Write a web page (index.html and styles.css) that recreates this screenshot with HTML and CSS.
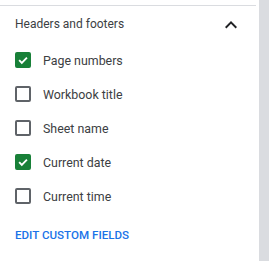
FILE: index.html
```html
<!DOCTYPE html>
<html>
<head>
<meta charset="utf-8">
<link rel="stylesheet" href="styles.css">
</head>
<body>
<div class="page">
  <div class="panel">
    <div class="rule"></div>
    <div class="header">
      <span class="title">Headers and footers</span>
      <svg class="chev" width="12" height="8" viewBox="0 0 12 8"><path d="M1.4 7.4 6 2.8l4.6 4.6L12 6 6 0 0 6z" fill="#202124"/></svg>
    </div>
    <ul class="list">
      <li class="item"><span class="box checked"><svg width="14" height="14" viewBox="0 0 14 14"><path d="M2.5 7.2 5.6 10.3 11.6 4.3" fill="none" stroke="#fff" stroke-width="2.2"/></svg></span><span class="label">Page numbers</span></li>
      <li class="item"><span class="box"></span><span class="label">Workbook title</span></li>
      <li class="item"><span class="box"></span><span class="label">Sheet name</span></li>
      <li class="item"><span class="box checked"><svg width="14" height="14" viewBox="0 0 14 14"><path d="M2.5 7.2 5.6 10.3 11.6 4.3" fill="none" stroke="#fff" stroke-width="2.2"/></svg></span><span class="label">Current date</span></li>
      <li class="item"><span class="box"></span><span class="label">Current time</span></li>
    </ul>
    <div class="link">EDIT CUSTOM FIELDS</div>
  </div>
  <div class="scroll"></div>
</div>
</body>
</html>
```
FILE: styles.css
```css
html, body { margin: 0; padding: 0; background: #fff; }
body { font-family: Roboto, "Noto Sans", sans-serif; color: #3c4043; }
.page { display: flex; width: 269px; height: 261px; }
.panel { width: 259px; padding-top: 5px; box-sizing: border-box; }
.scroll { width: 10px; background: #dadce0; }
.rule { height: 1px; background: #dadce0; margin-right: 3px; }
.header { display: flex; align-items: center; justify-content: space-between; height: 36px; padding: 0 22px 0 15px; font-size: 12px; }
.chev { display: block; margin-top: 1px; }
.list { list-style: none; margin: 0; padding: 0; margin-top: 1px; }
.item { display: flex; align-items: center; height: 34px; padding-left: 15px; font-size: 12.4px; }
.box { width: 16px; height: 16px; box-sizing: border-box; border: 2px solid #5f6368; border-radius: 2px; display: flex; align-items: center; justify-content: center; margin-right: 12px; }
.box.checked { background: #188038; border-color: #188038; }
.box svg { display: block; }
.link { padding-left: 15px; margin-top: 15px; font-size: 11.6px; font-weight: 500; color: #1a73e8; }
```
